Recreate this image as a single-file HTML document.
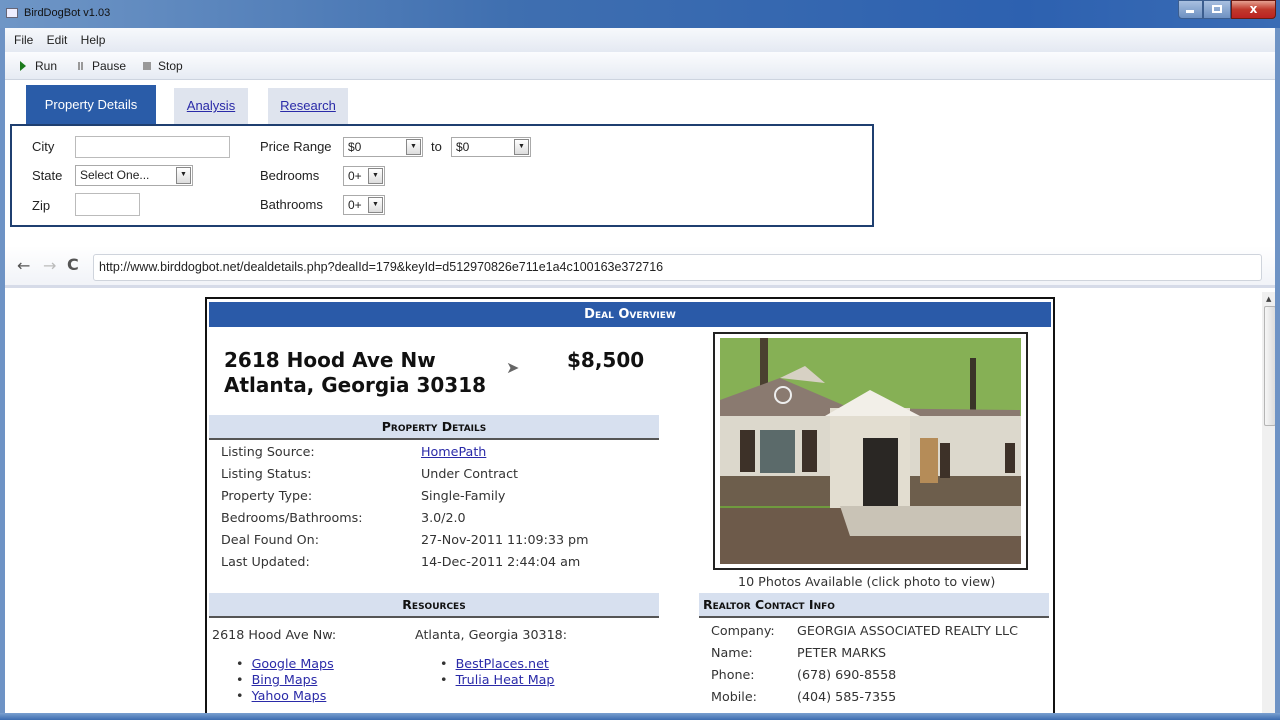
<!DOCTYPE html>
<html><head><meta charset="utf-8"><style>
*{box-sizing:border-box;margin:0;padding:0}
html,body{width:1280px;height:720px;overflow:hidden}
body{background:#fff;font-family:"DejaVu Sans","Liberation Sans",sans-serif;position:relative;color:#222}
.a{position:absolute}
.t{font-size:13px;font-family:"Liberation Sans",sans-serif}
.v{font-size:12.7px;color:#333}
.inp{position:absolute;background:#fff;border:1px solid #bbb}
.sel{position:absolute;background:#fff;border:1px solid #aaa;font-size:12px;font-family:"Liberation Sans",sans-serif;padding:2px 4px;color:#222}
.sel i{position:absolute;right:1px;top:1px;bottom:1px;width:15px;background:linear-gradient(#fff,#ddd);border:1px solid #888;font-style:normal;font-size:7px;text-align:center;line-height:14px}
.hdr{position:absolute;background:#d7e0ef;border-bottom:2px solid #555;font-variant:small-caps;font-weight:bold;font-size:12.5px;text-align:center;color:#111;font-family:"DejaVu Sans",sans-serif}
a{color:#2a2aa8;text-decoration:underline}
</style></head><body>
<div class="a" style="left:0;top:0;width:1280px;height:28px;background:linear-gradient(90deg,#6f96c6,#3f6fb0 40%,#2d61b0 80%,#3a6cb5)"></div>
<div class="a" style="left:6px;top:8px;width:12px;height:10px;background:#eef;border:1px solid #667"></div>
<div class="a t" style="left:24px;top:7px;font-size:11px;color:#111">BirdDogBot v1.03</div>
<div class="a" style="left:1178px;top:0;width:25px;height:19px;background:linear-gradient(#a9c0e0,#6e91c2);border:1px solid #3c5e8f;border-radius:0 0 0 4px"></div>
<div class="a" style="left:1186px;top:10px;width:8px;height:3px;background:#fff"></div>
<div class="a" style="left:1203px;top:0;width:28px;height:19px;background:linear-gradient(#a9c0e0,#6e91c2);border:1px solid #3c5e8f"></div>
<div class="a" style="left:1212px;top:5px;width:10px;height:8px;border:2px solid #fff"></div>
<div class="a" style="left:1231px;top:0;width:45px;height:19px;background:linear-gradient(#e5a090,#c0392b 50%,#b22);border:1px solid #6a1b12;border-radius:0 0 4px 0;color:#fff;font-weight:bold;font-size:12px;text-align:center;line-height:17px">x</div>
<div class="a" style="left:5px;top:28px;width:1270px;height:24px;background:linear-gradient(#f7f9fc,#e4e9f2)"></div>
<div class="a t" style="left:14px;top:33px;font-size:12px">File&nbsp;&nbsp;&nbsp;&nbsp;Edit&nbsp;&nbsp;&nbsp;&nbsp;Help</div>
<div class="a" style="left:5px;top:52px;width:1270px;height:28px;background:linear-gradient(#fbfcfe,#e6ebf3);border-bottom:1px solid #cdd4df"></div>
<div class="a" style="left:20px;top:61px;width:0;height:0;border-left:6px solid #1b7a1b;border-top:5px solid transparent;border-bottom:5px solid transparent"></div>
<div class="a t" style="left:35px;top:59px;font-size:12px">Run</div>
<div class="a" style="left:78px;top:62px;width:2px;height:8px;background:#999;box-shadow:3px 0 #999"></div>
<div class="a t" style="left:92px;top:59px;font-size:12px">Pause</div>
<div class="a" style="left:143px;top:62px;width:8px;height:8px;background:#999"></div>
<div class="a t" style="left:158px;top:59px;font-size:12px">Stop</div>
<div class="a t" style="left:26px;top:85px;width:130px;height:40px;background:#2a5ca8;color:#fff;text-align:center;line-height:40px">Property Details</div>
<div class="a t" style="left:174px;top:88px;width:74px;height:36px;background:#dfe4ee;text-align:center;line-height:36px"><a>Analysis</a></div>
<div class="a t" style="left:268px;top:88px;width:80px;height:36px;background:#dfe4ee;text-align:center;line-height:36px"><a>Research</a></div>
<div class="a" style="left:10px;top:124px;width:864px;height:103px;border:2px solid #1f3f70"></div>
<div class="a t" style="left:32px;top:139px">City</div>
<div class="inp" style="left:75px;top:136px;width:155px;height:22px"></div>
<div class="a t" style="left:32px;top:168px">State</div>
<div class="sel" style="left:75px;top:165px;width:118px;height:21px">Select One...<i>▼</i></div>
<div class="a t" style="left:32px;top:198px">Zip</div>
<div class="inp" style="left:75px;top:193px;width:65px;height:23px"></div>
<div class="a t" style="left:260px;top:139px">Price Range</div>
<div class="sel" style="left:343px;top:137px;width:80px;height:20px">$0<i>▼</i></div>
<div class="a t" style="left:431px;top:139px">to</div>
<div class="sel" style="left:451px;top:137px;width:80px;height:20px">$0<i>▼</i></div>
<div class="a t" style="left:260px;top:168px">Bedrooms</div>
<div class="sel" style="left:343px;top:166px;width:42px;height:20px">0+<i>▼</i></div>
<div class="a t" style="left:260px;top:197px">Bathrooms</div>
<div class="sel" style="left:343px;top:195px;width:42px;height:20px">0+<i>▼</i></div>
<div class="a" style="left:5px;top:246px;width:1270px;height:42px;background:linear-gradient(#fff,#f1f3f8);border-bottom:3px solid #d6dbe8"></div>
<div class="a" style="left:17px;top:256px;font-size:16px;color:#555">←</div>
<div class="a" style="left:43px;top:256px;font-size:16px;color:#bbb">→</div>
<div class="a" style="left:67px;top:255px;font-size:16px;color:#555;font-weight:bold">C</div>
<div class="a" style="left:93px;top:254px;width:1169px;height:27px;background:#fff;border:1px solid #cfd4dc;border-radius:3px"></div>
<div class="a t" style="left:99px;top:260px;font-size:12.5px;color:#222">http://www.birddogbot.net/dealdetails.php?dealId=179&amp;keyId=d512970826e711e1a4c100163e372716</div>
<div class="a" style="left:1262px;top:292px;width:16px;height:421px;background:#f0f0f0"></div>
<div class="a" style="left:1264px;top:306px;width:12px;height:120px;background:linear-gradient(90deg,#f6f6f6,#dcdcdc);border:1px solid #b5b5b5;border-radius:2px"></div>
<div class="a" style="left:1266px;top:295px;font-size:7px;color:#444">▲</div>
<div class="a" style="left:205px;top:297px;width:850px;height:420px;border:2px solid #111;border-bottom:none"></div>
<div class="a" style="left:209px;top:302px;width:842px;height:25px;background:#2a5aa8;color:#fff;font-variant:small-caps;font-weight:bold;font-size:13px;text-align:center;line-height:25px;font-family:'DejaVu Sans',sans-serif">Deal Overview</div>
<div class="a" style="left:224px;top:348px;font-size:20px;font-weight:bold;line-height:25px;color:#111">2618 Hood Ave Nw<br>Atlanta, Georgia 30318</div>
<div class="a" style="left:567px;top:348px;font-size:20px;font-weight:bold;color:#111">$8,500</div>
<div class="a" style="left:506px;top:358px;font-size:16px;color:#666">➤</div>
<div class="hdr" style="left:209px;top:415px;width:450px;height:25px;line-height:23px">Property Details</div>
<div class="a v" style="left:221px;top:441px;line-height:22px">Listing Source:<br>Listing Status:<br>Property Type:<br>Bedrooms/Bathrooms:<br>Deal Found On:<br>Last Updated:</div>
<div class="a v" style="left:421px;top:441px;line-height:22px"><a>HomePath</a><br>Under Contract<br>Single-Family<br>3.0/2.0<br>27-Nov-2011 11:09:33 pm<br>14-Dec-2011 2:44:04 am</div>
<div class="hdr" style="left:209px;top:593px;width:450px;height:25px;line-height:23px">Resources</div>
<div class="a v" style="left:212px;top:627px">2618 Hood Ave Nw:</div>
<div class="a v" style="left:415px;top:627px">Atlanta, Georgia 30318:</div>
<div class="a v" style="left:236px;top:656px;line-height:16px">•&nbsp;&nbsp;<a>Google Maps</a><br>•&nbsp;&nbsp;<a>Bing Maps</a><br>•&nbsp;&nbsp;<a>Yahoo Maps</a></div>
<div class="a v" style="left:440px;top:656px;line-height:16px">•&nbsp;&nbsp;<a>BestPlaces.net</a><br>•&nbsp;&nbsp;<a>Trulia Heat Map</a></div>
<div class="hdr" style="left:699px;top:593px;width:350px;height:25px;line-height:23px;text-align:left;padding-left:4px">Realtor Contact Info</div>
<div class="a v" style="left:711px;top:620px;line-height:22px">Company:<br>Name:<br>Phone:<br>Mobile:</div>
<div class="a v" style="left:797px;top:620px;line-height:22px">GEORGIA ASSOCIATED REALTY LLC<br>PETER MARKS<br>(678) 690-8558<br>(404) 585-7355</div>
<div class="a" style="left:713px;top:332px;width:315px;height:238px;border:2px solid #222"></div>
<svg class="a" style="left:720px;top:338px" width="301" height="226" viewBox="0 0 301 226">
<rect width="301" height="226" fill="#6f9a3e"/>
<rect width="301" height="80" fill="#86b055"/>
<rect x="40" y="0" width="8" height="60" fill="#4a4030"/><rect x="250" y="20" width="6" height="70" fill="#3a3428"/>
<polygon points="0,62 60,40 130,70 300,72 300,110 0,110" fill="#8a7a70"/>
<rect x="0" y="78" width="301" height="70" fill="#dcd8cc"/>
<rect x="0" y="138" width="301" height="30" fill="#6d5e4c"/>
<polygon points="60,40 85,28 105,45" fill="#d7d1c4"/>
<circle cx="63" cy="57" r="8" fill="none" stroke="#eee" stroke-width="2"/>
<rect x="110" y="70" width="80" height="110" fill="#e2ddd0"/>
<polygon points="105,78 150,52 200,78" fill="#f2efe8"/>
<rect x="143" y="100" width="35" height="80" fill="#2a2724"/>
<rect x="20" y="92" width="15" height="42" fill="#3d3128"/><rect x="40" y="92" width="35" height="43" fill="#5b6a6a"/><rect x="82" y="92" width="15" height="42" fill="#3d3128"/>
<rect x="200" y="100" width="18" height="45" fill="#b58c58"/><rect x="220" y="105" width="10" height="35" fill="#3d3128"/>
<rect x="285" y="105" width="10" height="30" fill="#3d3128"/>
<rect x="0" y="170" width="301" height="56" fill="#6d5a4a"/>
<polygon points="120,168 301,168 301,198 130,198" fill="#c9c3b6"/>
</svg>
<div class="a v" style="left:738px;top:574px">10 Photos Available (click photo to view)</div>
<div class="a" style="left:0;top:28px;width:5px;height:692px;background:#6e93c5"></div>
<div class="a" style="left:1275px;top:28px;width:5px;height:692px;background:#6e93c5"></div>
<div class="a" style="left:0;top:713px;width:1280px;height:7px;background:linear-gradient(#7aa0d0,#3d6cb0)"></div>
</body></html>
